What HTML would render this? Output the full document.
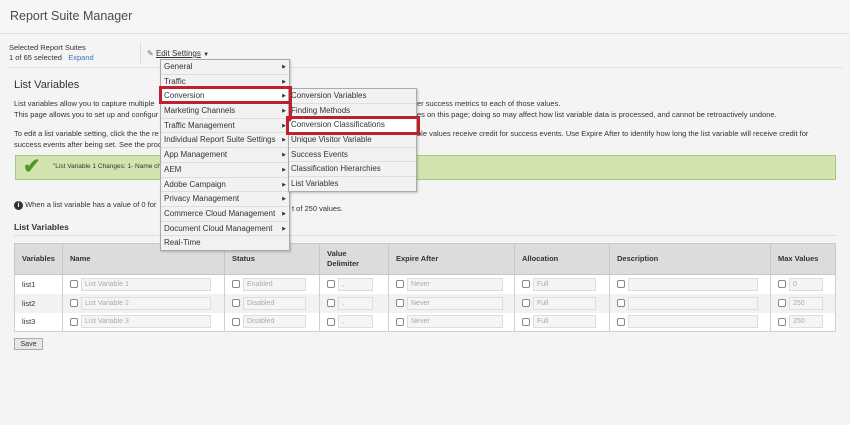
<!DOCTYPE html>
<html><head><meta charset="utf-8"><style>
*{box-sizing:border-box;margin:0;padding:0}
body{width:850px;height:425px;background:#f4f4f4;font-family:"Liberation Sans",sans-serif;color:#333;position:relative;overflow:hidden;font-size:8px}
.a{position:absolute;white-space:nowrap}
.menu{position:absolute;background:#f2f2f2;border:1px solid #aaa;box-shadow:1px 1px 2px rgba(0,0,0,.2)}
.mi{height:14.7px;line-height:14px;padding-left:3px;font-size:8px;color:#333;border-bottom:1px solid #ddd;position:relative}
.mi .t{position:absolute;right:3px;top:0;font-size:5px}
.sub .mi{padding-left:2px}
table{position:absolute;left:14px;top:243px;width:822px;border-collapse:collapse;font-size:7.5px}
th{background:#dcdcdc;text-align:left;font-weight:600;color:#333;height:31px;padding-left:7px;border:1px solid #c8c8c8;line-height:10px}
td{height:19px;border-left:1px solid #d0d0d0;border-right:1px solid #d0d0d0;padding-left:7px;position:relative;color:#333}
tr.w td{background:#fff}
tr.g td{background:#f2f2f2}
.cb{display:inline-block;width:8px;height:8px;border:1px solid #888;border-radius:2px;background:#fff;vertical-align:middle;margin-right:3px}
.in{display:inline-block;height:13px;border:1px solid #ddd;background:#f5f5f5;color:#aaa;font-size:7px;line-height:12px;padding-left:3px;vertical-align:middle}
</style></head><body>
<div class="a" style="left:0;top:0;width:850px;height:34px;background:#f6f6f6;border-bottom:1px solid #e2e2e2"></div>
<div class="a" style="left:10px;top:9px;font-size:12.5px;color:#4b4b4b">Report Suite Manager</div>
<div class="a" style="left:9px;top:43px;font-size:7.5px">Selected Report Suites</div>
<div class="a" style="left:9px;top:53px;font-size:7.5px">1 of 65 selected &nbsp; <span style="color:#3b74c4">Expand</span></div>
<div class="a" style="left:140px;top:42px;width:1px;height:22px;background:#ddd"></div>
<div class="a" style="left:8px;top:67px;width:834px;height:1px;background:#e0e0e0"></div>
<div class="a" style="left:147px;top:49px;font-size:8px"><span style="color:#666">&#9998;</span> <span style="text-decoration:underline">Edit Settings</span> <span style="font-size:6px">&#9660;</span></div>

<div class="a" style="left:14px;top:79px;font-size:11px;color:#333">List Variables</div>
<div class="a" style="left:14px;top:99px;font-size:7.5px;line-height:10.5px">List variables allow you to capture multiple<br>This page allows you to set up and configur</div>
<div class="a" style="left:417px;top:99px;font-size:7.5px;line-height:10.5px">er success metrics to each of those values.<br>es on this page; doing so may affect how list variable data is processed, and cannot be retroactively undone.</div>
<div class="a" style="left:14px;top:129px;font-size:7.5px;line-height:10.5px">To edit a list variable setting, click the the re<br>success events after being set. See the prod</div>
<div class="a" style="left:417px;top:129px;font-size:7.5px;line-height:10.5px">ble values receive credit for success events. Use Expire After to identify how long the list variable will receive credit for</div>
<div class="a" style="left:15px;top:155px;width:821px;height:25px;background:#d3e4b1;border:1px solid #9fcb7d"></div>
<div class="a" style="left:23px;top:154px;font-size:21px;color:#4a9a20;font-weight:bold">&#10004;</div>
<div class="a" style="left:53px;top:163px;font-size:6.5px">"List Variable 1 Changes: 1- Name cha</div>
<div class="a" style="left:14px;top:200px;font-size:7.5px"><span style="display:inline-block;width:9px;height:9px;border-radius:50%;background:#333;color:#fff;font-size:7px;text-align:center;line-height:9px;font-weight:bold">i</span> When a list variable has a value of 0 for</div>
<div class="a" style="left:292px;top:204px;font-size:7.5px">t of 250 values.</div>
<div class="a" style="left:14px;top:222px;font-size:8.5px;font-weight:bold">List Variables</div>
<div class="a" style="left:14px;top:235px;width:822px;height:1px;background:#ddd"></div>

<table>
<tr><th style="width:48px">Variables</th><th style="width:162px">Name</th><th style="width:95px">Status</th><th style="width:69px">Value<br>Delimiter</th><th style="width:126px">Expire After</th><th style="width:95px">Allocation</th><th style="width:161px">Description</th><th>Max Values</th></tr>
<tr class="w"><td>list1</td><td><span class="cb"></span><span class="in" style="width:130px">List Variable 1</span></td><td><span class="cb"></span><span class="in" style="width:63px">Enabled</span></td><td><span class="cb"></span><span class="in" style="width:35px">,</span></td><td><span class="cb"></span><span class="in" style="width:96px">Never</span></td><td><span class="cb"></span><span class="in" style="width:63px">Full</span></td><td><span class="cb"></span><span class="in" style="width:130px"></span></td><td><span class="cb"></span><span class="in" style="width:34px">0</span></td></tr>
<tr class="g"><td>list2</td><td><span class="cb"></span><span class="in" style="width:130px">List Variable 2</span></td><td><span class="cb"></span><span class="in" style="width:63px">Disabled</span></td><td><span class="cb"></span><span class="in" style="width:35px">,</span></td><td><span class="cb"></span><span class="in" style="width:96px">Never</span></td><td><span class="cb"></span><span class="in" style="width:63px">Full</span></td><td><span class="cb"></span><span class="in" style="width:130px"></span></td><td><span class="cb"></span><span class="in" style="width:34px">250</span></td></tr>
<tr class="w" style="border-bottom:1px solid #d0d0d0"><td>list3</td><td><span class="cb"></span><span class="in" style="width:130px">List Variable 3</span></td><td><span class="cb"></span><span class="in" style="width:63px">Disabled</span></td><td><span class="cb"></span><span class="in" style="width:35px">,</span></td><td><span class="cb"></span><span class="in" style="width:96px">Never</span></td><td><span class="cb"></span><span class="in" style="width:63px">Full</span></td><td><span class="cb"></span><span class="in" style="width:130px"></span></td><td><span class="cb"></span><span class="in" style="width:34px">250</span></td></tr>
</table>
<div class="a" style="left:14px;top:338px;width:29px;height:12px;border:1px solid #aaa;background:#e6e6e6;font-size:7px;text-align:center;line-height:11px">Save</div>

<div class="menu" style="left:160px;top:59px;width:130px;height:192px">
<div class="mi">General<span class="t">&#9654;</span></div>
<div class="mi">Traffic<span class="t">&#9654;</span></div>
<div class="mi" style="background:#fff">Conversion<span class="t">&#9654;</span></div>
<div class="mi">Marketing Channels<span class="t">&#9654;</span></div>
<div class="mi">Traffic Management<span class="t">&#9654;</span></div>
<div class="mi">Individual Report Suite Settings<span class="t">&#9654;</span></div>
<div class="mi">App Management<span class="t">&#9654;</span></div>
<div class="mi">AEM<span class="t">&#9654;</span></div>
<div class="mi">Adobe Campaign<span class="t">&#9654;</span></div>
<div class="mi">Privacy Management<span class="t">&#9654;</span></div>
<div class="mi">Commerce Cloud Management<span class="t">&#9654;</span></div>
<div class="mi">Document Cloud Management<span class="t">&#9654;</span></div>
<div class="mi" style="border:0">Real-Time</div>
</div>
<div class="menu sub" style="left:288px;top:88px;width:129px;height:104px">
<div class="mi">Conversion Variables</div>
<div class="mi">Finding Methods</div>
<div class="mi" style="background:#fff">Conversion Classifications</div>
<div class="mi">Unique Visitor Variable</div>
<div class="mi">Success Events</div>
<div class="mi">Classification Hierarchies</div>
<div class="mi" style="border:0">List Variables</div>
</div>
<div class="a" style="left:159px;top:86px;width:133px;height:18px;border:3px solid #c0202e"></div>
<div class="a" style="left:286px;top:116px;width:134px;height:19px;border:3px solid #c0202e"></div>
<div class="a" style="left:289px;top:101px;width:3px;height:17px;background:#c0202e"></div>
<div class="a" style="left:286px;top:116px;width:0;height:0;border-left:4.5px solid transparent;border-right:4.5px solid transparent;border-top:6px solid #c0202e"></div>
</body></html>
